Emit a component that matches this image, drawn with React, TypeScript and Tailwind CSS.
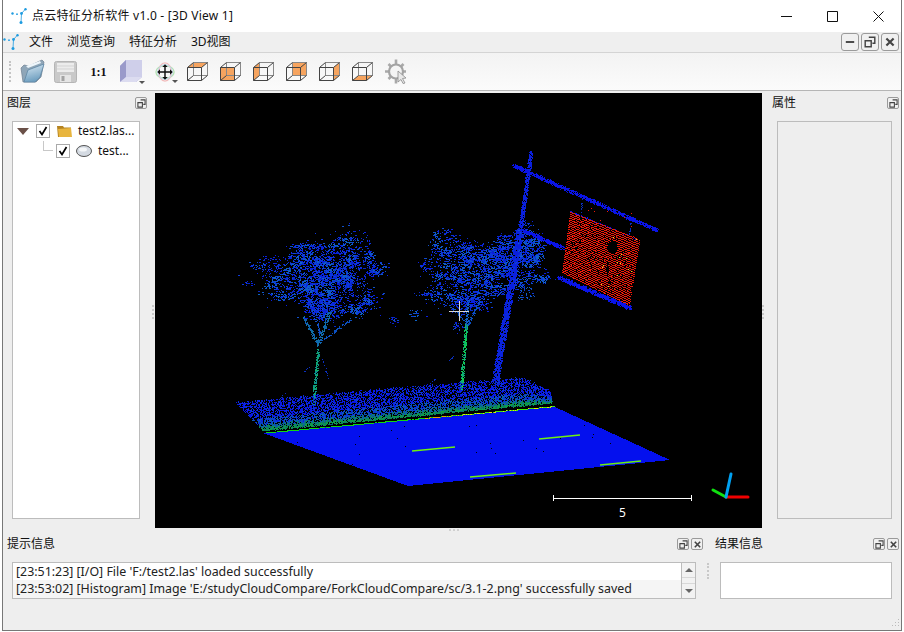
import { useMemo } from 'react';

const ui = { fontFamily: '"Noto Sans", "Noto Sans CJK SC", sans-serif' };

function Logo({ className }: { className: string }) {
  return (
    <svg className={className} viewBox="0 0 16 16" fill="#1e9be0">
      <path d="M10.5 5.5 14.5 1M10.5 5.5 10 14.5" stroke="#1e9be0" strokeWidth="0.8" />
      <circle cx="1.5" cy="5.5" r="1.2" />
      <circle cx="6" cy="6.2" r="0.9" />
      <circle cx="10.5" cy="5.5" r="1.4" />
      <circle cx="14.5" cy="1.2" r="1.2" />
      <circle cx="10" cy="14.5" r="1.5" />
    </svg>
  );
}

function DockIcon({ kind, big }: { kind: 'min' | 'float' | 'close'; big?: boolean }) {
  return (
    <span className={`flex items-center justify-center border border-[#9a9a9a] bg-[#f0f0f0] ${big ? 'w-[18px] h-[18px] rounded-[3px]' : 'w-[12px] h-[12px] rounded-[2px]'}`}>
      <svg viewBox="0 0 10 10" className={big ? 'w-[12px] h-[12px]' : 'w-[9px] h-[9px]'} fill="none" stroke="#444" strokeWidth="1.2">
        {kind === 'min' && <path d="M1.5 5h7" strokeWidth="1.6" />}
        {kind === 'float' && <path d="M4 1h5v5H7M1 4h5v5H1z" />}
        {kind === 'close' && <path d="M2 2l6 6M8 2l-6 6" strokeWidth="1.8" />}
      </svg>
    </span>
  );
}

function ViewCube({ face }: { face: string }) {
  const faces: Record<string, string> = {
    top: '0,5 6,0 20,0 14,5',
    front: '0,5 14,5 14,18 0,18',
    left: '0,5 6,0 6,13 0,18',
    back: '6,0 20,0 20,13 6,13',
    right: '14,5 20,0 20,13 14,18',
    bottom: '0,18 6,13 20,13 14,18',
  };
  return (
    <svg width="21" height="19" viewBox="-0.5 -0.5 21 19">
      <polygon points={faces[face]} fill="#f6a45f" />
      <g fill="none" stroke="#444" strokeWidth="1">
        <path d="M6 0h14v13H6z" stroke="#888" />
        <path d="M0 5h14v13H0zM0 5l6-5M14 5l6-5M14 18l6-5M0 18l6-5" />
      </g>
    </svg>
  );
}

function Drop() {
  return <span className="absolute right-[3px] bottom-[-1px] w-0 h-0 border-x-[3px] border-x-transparent border-t-[3px] border-t-[#555]" />;
}

function Toolbar() {
  return (
    <div className="h-[38px] flex items-center bg-gradient-to-b from-[#f3f3f3] to-[#fbfbfb] border-b border-[#b5b5b5]">
      <div className="ml-[6px] mr-[4px] w-[3px] h-[21px] border-l-2 border-dotted border-[#c4c4c4]" />
      <div className="flex items-center">
        <span className="w-[33px] flex justify-center">
          <svg width="25" height="25" viewBox="0 0 25 25">
            <defs>
              <linearGradient id="fold" x1="0" y1="0" x2="0.3" y2="1">
                <stop offset="0" stopColor="#dcebf5" />
                <stop offset="1" stopColor="#6f9fc0" />
              </linearGradient>
            </defs>
            <path d="M3 23 1 9l3-3 5 1 13-6 2 2-3 15-5 5z" fill="#8fa6b8" stroke="#6f8090" strokeWidth=".7" />
            <path d="M4 23 8 11 24 5l-4 13-5 5z" fill="url(#fold)" stroke="#5f88a6" strokeWidth=".8" />
            <path d="M6 7l14-5 1 2-13 5z" fill="#eef6fb" />
          </svg>
        </span>
        <span className="w-[33px] flex justify-center">
          <svg width="23" height="22" viewBox="0 0 23 22">
            <rect x=".5" y=".5" width="22" height="21" rx="2" fill="#c9c9c9" stroke="#b5b5b5" />
            <rect x="3" y="2" width="17" height="9" fill="#ececec" />
            <path d="M3 5h17M3 8h17" stroke="#d3d3d3" />
            <rect x="6" y="14" width="11" height="7" fill="#e5e5e5" />
            <rect x="7.5" y="15" width="3" height="5" fill="#a3a3a3" />
          </svg>
        </span>
        <span className="w-[33px] text-center text-[12px] leading-none font-bold text-[#111]" style={{ fontFamily: '"Liberation Serif", serif' }}>1:1</span>
        <span className="w-[33px] flex justify-center relative">
          <svg width="23" height="23" viewBox="0 0 23 23">
            <polygon points="0,6 6,0 22,0 22,17 16,22 0,22" fill="#a9a9d8" />
            <polygon points="6,0 22,0 22,17 6,17" fill="#cfcfea" />
            <polygon points="0,6 6,0 6,17 0,22" fill="#9a9aca" />
            <polygon points="0,22 6,17 22,17 16,22" fill="#dcdcf0" />
          </svg>
          <Drop />
        </span>
        <span className="w-[33px] flex justify-center relative">
          <svg width="20" height="20" viewBox="0 0 22 22" fill="none">
            <ellipse cx="11" cy="11" rx="10" ry="7" stroke="#b5e3b5" strokeWidth="1.5" />
            <ellipse cx="11" cy="11" rx="7" ry="10" stroke="#f2bcbc" strokeWidth="1.5" />
            <circle cx="11" cy="11" r="8" stroke="#bcd6f2" strokeWidth="1" />
            <path d="M11 5v12M5 11h12" stroke="#111" strokeWidth="1.6" />
            <path d="M11 2.5l3 3H8zM11 19.5l3-3H8zM2.5 11l3-3v6zM19.5 11l-3-3v6z" fill="#111" />
          </svg>
          <Drop />
        </span>
        {['top', 'front', 'left', 'back', 'right', 'bottom'].map((f) => (
          <span key={f} className="w-[33px] flex justify-center"><ViewCube face={f} /></span>
        ))}
        <span className="w-[33px] flex justify-center">
          <svg width="24" height="25" viewBox="0 0 24 25" fill="none">
            <path d="M12 0.5v5M12 19.5v5M1 12.5h5M18 12.5h4M4.5 5l3 3M19.5 5l-3 3M4.5 20l3-3" stroke="#a9a9a9" strokeWidth="2.6" />
            <circle cx="12" cy="12.5" r="7" stroke="#a3a3a3" strokeWidth="2.2" fill="#f4f4f4" />
            <path d="M14 12l8 7-3.5.5L21 24l-2 .5-2-4-3 2.5z" fill="#e8e8e8" stroke="#8c8c8c" strokeWidth=".8" />
          </svg>
        </span>
      </div>
    </div>
  );
}

function mulberry(a: number) {
  return () => {
    a |= 0; a = (a + 0x6d2b79f5) | 0;
    let t = Math.imul(a ^ (a >>> 15), 1 | a);
    t = (t + Math.imul(t ^ (t >>> 7), 61 | t)) ^ t;
    return ((t ^ (t >>> 14)) >>> 0) / 4294967296;
  };
}

// fake point cloud, page coordinates minus the viewport offset
function buildCloud() {
  const r = mulberry(20);
  const layers: Record<string, string[]> = {};
  const put = (x: number, y: number, c: string, w = 1) => {
    (layers[c] ||= []).push(`M${Math.round(x - 155)} ${Math.round(y - 93)}h${w}v1h-${w}z`);
  };
  const gauss = () => (r() + r() + r() + r() - 2) / 0.82;
  const canopy = ['#0a1fe0', '#0c38dc', '#1050c8', '#0828c8', '#0a1fe0'];
  const pick = (a: string[]) => a[Math.floor(r() * a.length)];
  const lump = (cx: number, cy: number, sx: number, sy: number, n: number, a = canopy) => {
    for (let i = 0; i < n; i++) put(cx + gauss() * sx, cy + gauss() * sy, pick(a), r() > 0.6 ? 2 : 1);
  };
  // crown: wobbly outline, thin scatter, then many small tufts of leaves
  const crown = (cx: number, cy: number, rx: number, ry: number, n: number) => {
    const ph = r() * 6;
    const spot = () => {
      const a = r() * Math.PI * 2;
      const wob = 0.82 + 0.16 * Math.sin(3 * a + ph) + 0.12 * Math.sin(7 * a + ph * 2);
      const d = Math.pow(r(), 0.62) * wob * (r() > 0.93 ? 1.3 : 1);
      return [cx + Math.cos(a) * d * rx, cy + Math.sin(a) * d * ry];
    };
    for (let i = 0; i < n * 0.4; i++) {
      const [x, y] = spot();
      put(x, y, pick(canopy), r() > 0.7 ? 2 : 1);
    }
    const tufts = Math.round(n * 0.6 / 22);
    for (let i = 0; i < tufts; i++) {
      const [x, y] = spot();
      lump(x, y, 3 + r() * 6, 1.5 + r() * 2.5, 22, r() > 0.5 ? dense : canopy);
    }
  };
  const line = (x1: number, y1: number, x2: number, y2: number, w: number, n: number, a: string[]) => {
    for (let i = 0; i < n; i++) {
      const t = r();
      put(x1 + (x2 - x1) * t + (r() - 0.5) * w, y1 + (y2 - y1) * t + (r() - 0.5) * w, pick(a));
    }
  };
  const dense = ['#1050c8', '#0f62c4', '#0c38dc'];

  // tree 1
  crown(325, 275, 72, 48, 3400);
  lump(322, 308, 13, 8, 340);
  lump(393, 320, 4, 3, 18);
  lump(248, 283, 4, 1.5, 14);
  line(318, 345, 303, 316, 3, 110, ['#1060b0', '#0f70a8']);
  line(318, 345, 330, 310, 3.5, 140, ['#1060b0', '#0f70a8']);
  line(322, 340, 352, 318, 2, 70, ['#0c50c0']);
  line(320, 335, 312, 304, 2.5, 70, ['#1050c8']);
  line(313, 405, 318, 350, 3, 240, ['#10a070', '#10c060', '#0c9090']);
  line(322, 358, 328, 378, 1, 12, ['#0a30c0']);
  line(310, 365, 304, 372, 1, 6, ['#0a30c0']);
  line(285, 393, 278, 400, 1, 6, ['#0a30c0']);

  // tree 2
  crown(463, 272, 54, 44, 1900);
  crown(515, 258, 38, 34, 1500);
  lump(470, 302, 12, 7, 240);
  lump(535, 258, 5, 3, 50, dense);
  line(468, 325, 450, 305, 2, 60, ['#0c50c0']);
  line(468, 325, 480, 300, 2, 60, ['#0c50c0']);
  line(466, 328, 468, 300, 2.5, 70, ['#0f62c4']);
  line(461, 390, 466, 325, 3, 280, ['#10c060', '#10d050', '#0ca080']);
  line(449, 360, 454, 355, 1, 8, ['#0a30c0']);
  line(428, 385, 437, 377, 1, 8, ['#0a30c0']);

  // pole and sign frame
  line(495, 382, 520, 230, 6.5, 1800, ['#0a20e0', '#0c30d0', '#0a20e0']);
  line(520, 230, 531, 152, 4, 550, ['#0a20e0']);
  line(513, 165, 657, 230, 3.5, 1200, ['#0a14e8']);
  line(523, 230, 563, 248, 3.5, 350, ['#0a14e8']);
  line(558, 277, 631, 308, 4, 800, ['#0a14e8']);
  line(582, 198, 581, 212, 1, 15, ['#0a30c0']);
  line(631, 218, 629, 235, 1, 14, ['#0a30c0']);
  line(570, 211, 640, 240, 1, 90, ['#0a14e8']);

  // sign face, hatched rows
  for (let row = 0; row < 33; row++) {
    const s = row / 32;
    const xa = 570 + (562 - 570) * s, ya = 212 + (272 - 212) * s;
    const xb = 640 + (630 - 640) * s, yb = 240 + (305 - 240) * s;
    for (let t = 0; t <= 1; t += 0.013) {
      const x = xa + (xb - xa) * t, y = ya + (yb - ya) * t;
      const hole = ((x - 612) / 5) ** 2 + ((y - 247) / 6.5) ** 2 < 1 || ((x - 607) / 1.5) ** 2 + ((y - 268) / 7) ** 2 < 1;
      if (!hole && r() > 0.07) put(x, y, '#f01808');
    }
  }
  for (let i = 0; i < 24; i++) put(585 + r() * 55, 192 + r() * 60 + i * 1.2, '#f01808');
  for (let i = 0; i < 14; i++) put(600 + r() * 40, 235 + r() * 55, '#d8e820');

  // shrubs along the road
  const up = (t: number): [number, number] => {
    const u = t < 0.55 ? [237 + (397 - 237) * (t / 0.55), 405 - 15 * (t / 0.55)]
      : t < 0.92 ? [397 + 126 * ((t - 0.55) / 0.37), 390 - 10 * ((t - 0.55) / 0.37)]
      : [523 + 27 * ((t - 0.92) / 0.08), 380 + 12 * ((t - 0.92) / 0.08)];
    return [u[0], u[1]];
  };
  for (let i = 0; i < 9500; i++) {
    const t = r(), s = Math.pow(r(), 1.45) * 1.08;
    const lx = 263 + 289 * t, ly = 431 - 28 * t;
    const [ux, uy] = up(t);
    const x = lx + (ux - lx) * s, y = ly + (uy - ly) * s - r() * 1.5;
    const c = s < 0.1 ? pick(['#0c8a50', '#0f9c48', '#0b6a78'])
      : s < 0.2 ? pick(['#0b6a78', '#0b5cb0', '#0c8a50'])
      : s < 0.45 ? pick(['#0a38d8', '#0b5cb0', '#0a20e0']) : pick(['#0a20e0', '#0a14e8', '#0c38dc']);
    put(x, y, c);
  }
  for (let i = 0; i < 1000; i++) {
    const t = r();
    const c = t > 0.68 ? (r() > 0.3 ? '#e8e800' : '#40e810') : t > 0.55 && r() > 0.7 ? '#e8a000' : '#10d810';
    put(265 + 290 * t, 432.5 - 26.5 * t, c);
  }

  // black specks on the road
  for (let i = 0; i < 30; i++) {
    const a = r(), b = r();
    const x = 290 + 350 * a - 60 * b + 60 * b * a, y = 425 + 40 * b + 20 * a - 18 * a * 1.2;
    put(x + 20, y, '#000000');
  }
  return layers;
}

function CloudView() {
  const layers = useMemo(buildCloud, []);
  return (
    <div className="relative w-[607px] h-[435px] bg-black shrink-0">
      <svg width="607" height="435" viewBox="0 0 607 435" className="block" shapeRendering="crispEdges">
        <polygon points="108,340 400,314 515,367 253,393" fill="#0410ee" />
        {Object.entries(layers).filter(([c]) => c !== '#000000').map(([c, d]) => <path key={c} d={d.join('')} fill={c} />)}
        <path d={layers['#000000'].join('')} fill="#000" />
        <g stroke="#6cf010" strokeWidth="1.6" shapeRendering="auto">
          <path d="M257 358 300 354M384 346 425 342M445 372 486 368M315 384 361 380" />
        </g>
        <path d="M304 208v20M294 218h20" stroke="#d8d8d8" strokeWidth="1" />
        <g shapeRendering="auto" strokeLinecap="round" strokeWidth="3">
          <path d="M571 404h22" stroke="#f00000" />
          <path d="M571 404 558 397" stroke="#10e010" />
          <path d="M571 404 576 381" stroke="#00a0f0" />
        </g>
        <path d="M398 405h138M398.5 402v6M536.5 402v6" stroke="#fff" strokeWidth="1" />
      </svg>
      <span className="absolute left-[464px] top-[411px] text-[12px] leading-[18px] text-white">5</span>
    </div>
  );
}

function GripV() {
  return <span className="absolute top-[212px] w-[2px] h-[14px] border-l-2 border-dotted border-[#c8c8c8]" />;
}

function App() {
  return (
    <div className="w-[904px] h-[632px] overflow-hidden bg-white" style={ui}>
      <div className="ml-[2px] w-[900px] h-[631px] flex flex-col bg-[#eeeeee] border-x border-b border-[#777] text-[#111]">
        <div className="h-[32px] bg-white flex items-center shrink-0">
          <Logo className="ml-[8px] w-[16px] h-[16px]" />
          <span className="ml-[5px] text-[12px] tracking-[0.22px]">点云特征分析软件 v1.0 - [3D View 1]</span>
          <div className="ml-auto flex items-center text-black">
            <span className="w-[45px] flex justify-center">
              <svg width="11" height="11" viewBox="0 0 11 11"><path d="M0 5.5h11" stroke="#111" /></svg>
            </span>
            <span className="w-[46px] flex justify-center">
              <svg width="11" height="11" viewBox="0 0 11 11"><path d="M.5.5h10v10H.5z" fill="none" stroke="#111" /></svg>
            </span>
            <span className="w-[46px] flex justify-center">
              <svg width="11" height="11" viewBox="0 0 11 11"><path d="M.5.5l10 10M10.5.5l-10 10" stroke="#111" /></svg>
            </span>
          </div>
        </div>

        <div className="h-[21px] flex items-center border-b border-[#d4d4d4] shrink-0 bg-[#efefef]">
          <Logo className="ml-[0px] w-[16px] h-[16px]" />
          <div className="ml-[10px] flex text-[12px]">
            <span className="w-[38px]">文件</span>
            <span className="w-[62px]">浏览查询</span>
            <span className="w-[62px]">特征分析</span>
            <span>3D视图</span>
          </div>
          <div className="ml-auto mr-[2px] flex gap-[2px]">
            <DockIcon kind="min" big />
            <DockIcon kind="float" big />
            <DockIcon kind="close" big />
          </div>
        </div>

        <Toolbar />

        <div className="h-[437px] flex pt-[2px] shrink-0">
          <div className="w-[152px] shrink-0 relative">
            <div className="flex items-center justify-between pl-[4px] pr-[8px] h-[20px] text-[12px]">
              <span>图层</span>
              <DockIcon kind="float" />
            </div>
            <div className="ml-[9px] mt-[8px] w-[128px] h-[398px] bg-white border border-[#bcbcbc] text-[12px]">
              <div className="h-[18px] flex items-center">
                <span className="ml-[4px] w-0 h-0 border-x-[6px] border-x-transparent border-t-[7px] border-t-[#6a5048]" />
                <span className="ml-[7px] w-[14px] h-[14px] border border-[#aaa] flex items-center justify-center">
                  <svg width="10" height="10" viewBox="0 0 10 10"><path d="M1.5 5 4 8.5 8.5 1" fill="none" stroke="#000" strokeWidth="1.7" /></svg>
                </span>
                <svg className="ml-[7px]" width="15" height="14" viewBox="0 0 15 14">
                  <path d="M0 2h6l1 1.5h7V13H1z" fill="#b58320" />
                  <path d="M1 5l13-1 1 9H2z" fill="#e8b53e" />
                </svg>
                <span className="ml-[6px] whitespace-nowrap">test2.las...</span>
              </div>
              <div className="h-[18px] mt-[2px] flex items-center relative">
                <span className="ml-[30px] -mt-[10px] w-[10px] h-[10px] border-l border-b border-[#c8c8c8]" />
                <span className="ml-[3px] w-[14px] h-[14px] border border-[#aaa] flex items-center justify-center">
                  <svg width="10" height="10" viewBox="0 0 10 10"><path d="M1.5 5 4 8.5 8.5 1" fill="none" stroke="#000" strokeWidth="1.7" /></svg>
                </span>
                <svg className="ml-[6px]" width="16" height="12" viewBox="0 0 16 12">
                  <ellipse cx="8" cy="6" rx="7.5" ry="5.5" fill="#d4dae2" stroke="#555" strokeWidth="1" />
                  <ellipse cx="7" cy="4.5" rx="4" ry="2" fill="#f4f6f8" />
                </svg>
                <span className="ml-[6px] whitespace-nowrap">test...</span>
              </div>
            </div>
            <span className="absolute right-[1px] top-[212px] w-[2px] h-[14px] border-l-2 border-dotted border-[#c8c8c8]" />
          </div>

          <CloudView />

          <div className="flex-1 relative">
            <GripV />
            <div className="flex items-center justify-between pl-[10px] pr-[2px] h-[20px] text-[12px]">
              <span>属性</span>
              <DockIcon kind="float" />
            </div>
            <div className="ml-[15px] mt-[8px] w-[115px] h-[398px] border border-[#bcbcbc]" />
          </div>
        </div>

        <div className="flex-1 flex relative">
          <div className="w-[701px] shrink-0 pt-[7px]">
            <div className="h-[18px] flex items-center justify-between pl-[4px] pr-[1px] text-[12px]">
              <span>提示信息</span>
              <div className="flex gap-[2px]">
                <DockIcon kind="float" />
                <DockIcon kind="close" />
              </div>
            </div>
            <div className="ml-[9px] mt-[9px] w-[684px] h-[37px] flex border border-[#bcbcbc] bg-white text-[12.4px] leading-[17px] text-[#222]">
              <div className="flex-1 whitespace-nowrap overflow-hidden">
                <div className="h-[17px] pl-[3px]">[23:51:23] [I/O] File 'F:/test2.las' loaded successfully</div>
                <div className="h-[18px] pl-[3px] bg-[#f5f5f5]">[23:53:02] [Histogram] Image 'E:/studyCloudCompare/ForkCloudCompare/sc/3.1-2.png' successfully saved</div>
              </div>
              <div className="w-[14px] flex flex-col border-l border-[#bcbcbc] bg-[#f2f2f2]">
                <span className="h-[14px] flex items-center justify-center">
                  <span className="w-0 h-0 border-x-[4px] border-x-transparent border-b-[4px] border-b-[#666]" />
                </span>
                <span className="h-[7px] border-y border-[#d8d8d8]" />
                <span className="h-[14px] flex items-center justify-center">
                  <span className="w-0 h-0 border-x-[4px] border-x-transparent border-t-[4px] border-t-[#666]" />
                </span>
              </div>
            </div>
          </div>
          <span className="ml-[3px] mt-[35px] w-[2px] h-[16px] border-l-2 border-dotted border-[#c8c8c8]" />
          <div className="flex-1 pt-[7px]">
            <div className="h-[18px] flex items-center justify-between pl-[6px] pr-[2px] text-[12px]">
              <span>结果信息</span>
              <div className="flex gap-[2px]">
                <DockIcon kind="float" />
                <DockIcon kind="close" />
              </div>
            </div>
            <div className="ml-[11px] mt-[9px] w-[172px] h-[37px] border border-[#bcbcbc] bg-white" />
          </div>
          <span className="absolute left-[446px] top-[1px] w-[10px] border-t-2 border-dotted border-[#d0d0d0]" />
          <svg className="absolute right-[1px] bottom-[1px]" width="10" height="10" viewBox="0 0 10 10" fill="#bbb">
            <path d="M8 0h1v1H8zM5 3h1v1H5zM8 3h1v1H8zM2 6h1v1H2zM5 6h1v1H5zM8 6h1v1H8z" />
          </svg>
        </div>
      </div>
      <div className="h-[1px] overflow-hidden pl-[380px] text-[15px] leading-[20px] whitespace-nowrap text-black">
        <div className="-mt-[2px]">的地面点和树木等特征信息，并对结果进行统计和分析与计算</div>
      </div>
    </div>
  );
}

export default App;
